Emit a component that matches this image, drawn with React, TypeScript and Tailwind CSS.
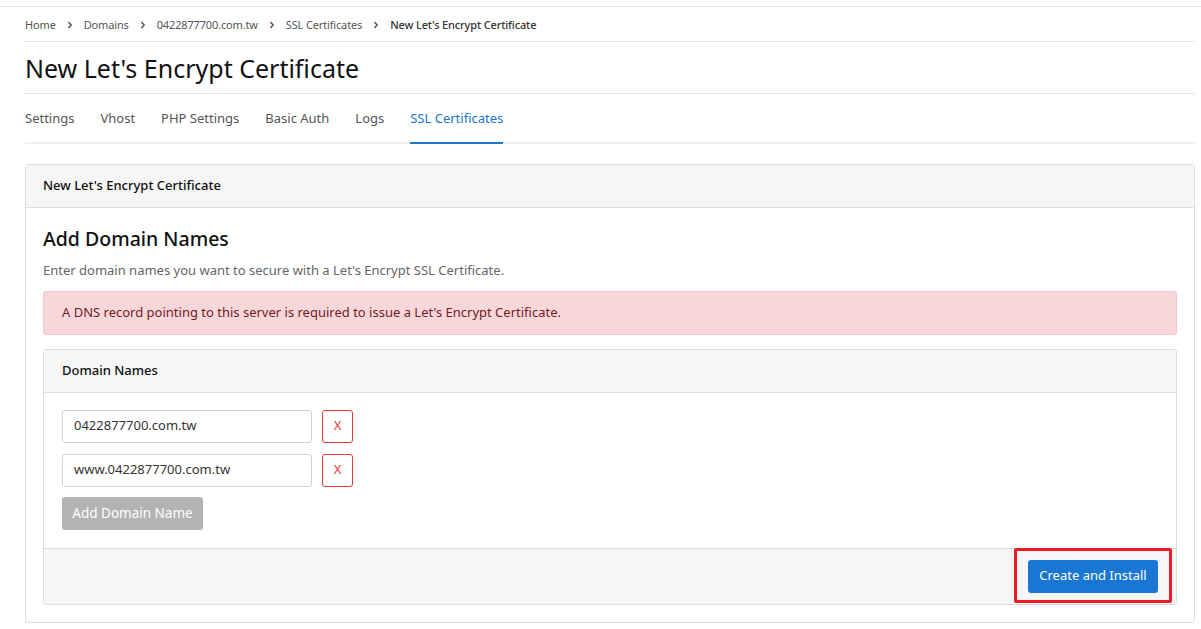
import { ChevronRight } from 'lucide-react'

const CRUMBS = ['Home', 'Domains', '0422877700.com.tw', 'SSL Certificates']
const TABS = ['Settings', 'Vhost', 'PHP Settings', 'Basic Auth', 'Logs', 'SSL Certificates']
const DOMAINS = ['0422877700.com.tw', 'www.0422877700.com.tw']

export default function App() {
  return (
    <div className="min-h-[629px] bg-white font-['Noto_Sans',sans-serif] text-[#333]">
      <div className="h-[7px] border-b border-[#e6e6e6]" />
      <div className="w-[1170px] ml-[25px]">
        {/* breadcrumb */}
        <div className="flex h-[35px] items-center gap-[9px] border-b border-[#e3e3e3] pt-[2px] text-[11px] tracking-[-0.15px] text-[#555]">
          {CRUMBS.map((c) => (
            <span key={c} className="flex items-center gap-[9px]">
              {c}
              <ChevronRight size={10} strokeWidth={3} className="text-[#444]" />
            </span>
          ))}
          <span className="font-medium text-[#333]">New Let's Encrypt Certificate</span>
        </div>

        <h1 className="flex h-[52px] items-center border-b border-[#e3e3e3] pt-[3px] text-[25px] font-normal text-[#111]">
          New Let's Encrypt Certificate
        </h1>

        {/* tabs */}
        <div className="flex h-[50px] gap-[26px] border-b-2 border-[#f0f0f0] text-[13px] text-[#555]">
          {TABS.map((t) => {
            const active = t === 'SSL Certificates'
            return (
              <div
                key={t}
                className={`-mb-[2px] flex items-center border-b-2 pt-[1px] ${
                  active ? 'border-[#1976d2] text-[#1976d2]' : 'border-transparent'
                }`}
              >
                {t}
              </div>
            )
          })}
        </div>

        {/* outer card */}
        <div className="mt-[20px] rounded-[3px] border border-[#ddd]">
          <div className="flex h-[43px] items-center border-b border-[#ddd] bg-[#f6f6f6] px-[17px] text-[13px] font-medium text-[#111]">
            New Let's Encrypt Certificate
          </div>
          <div className="px-[17px] pt-[17px] pb-[17px]">
            <h2 className="text-[19.5px] font-medium leading-[28px] text-[#111]">Add Domain Names</h2>
            <p className="mt-[8px] text-[13px] text-[#666]">
              Enter domain names you want to secure with a Let's Encrypt SSL Certificate.
            </p>
            <div className="mt-[10px] flex h-[44px] items-center rounded-[3px] border border-[#f5c6cb] bg-[#f8d7da] px-[18px] text-[13px] text-[#721c24]">
              A DNS record pointing to this server is required to issue a Let's Encrypt Certificate.
            </div>

            {/* inner card */}
            <div className="mt-[14px] rounded-[3px] border border-[#ddd]">
              <div className="flex h-[43px] items-center border-b border-[#ddd] bg-[#f6f6f6] px-[18px] text-[13px] font-medium text-[#111]">
                Domain Names
              </div>
              <div className="flex flex-col gap-[11px] px-[18px] pt-[17px] pb-[18px]">
                {DOMAINS.map((d) => (
                  <div key={d} className="flex items-center gap-[10px]">
                    <div className="flex h-[33px] w-[250px] items-center rounded-[3px] border border-[#ced4da] px-[11px] text-[13px] text-[#333]">
                      {d}
                    </div>
                    <button className="flex h-[33px] w-[31px] items-center justify-center rounded-[3px] border border-[#e53935] text-[13px] text-[#e53935]">
                      X
                    </button>
                  </div>
                ))}
                <button className="-mt-[1px] h-[33px] w-[141px] rounded-[3px] bg-[#b3b3b3] text-[13.5px] text-white">
                  Add Domain Name
                </button>
              </div>
              <div className="relative flex h-[56px] items-center justify-end border-t border-[#ddd] bg-[#f6f6f6] px-[18px]">
                <button className="h-[33px] w-[130px] rounded-[3px] bg-[#1976d2] text-[13px] text-white">
                  Create and Install
                </button>
                <div className="pointer-events-none absolute right-[4px] top-[-1px] h-[55px] w-[158px] rounded-[2px] border-[3px] border-[#ed1c24]" />
              </div>
            </div>
          </div>
        </div>
      </div>
    </div>
  )
}
